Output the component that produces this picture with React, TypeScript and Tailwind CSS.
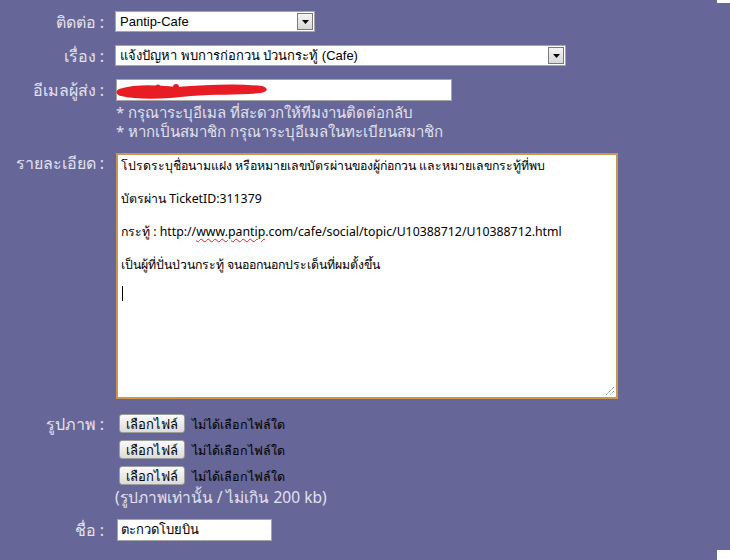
import React from 'react'

const thai = { fontFamily: "Tahoma, 'Noto Sans', 'DejaVu Sans', sans-serif" }
const arial = { fontFamily: "'Liberation Sans', Arial, 'Noto Sans', sans-serif" }

function Select({ value, width }: { value: string; width: string }) {
  return (
    <div
      className={`flex h-[21px] ${width} items-stretch border border-[#a5a5a5] bg-white`}
      style={arial}
    >
      <div className="flex-1 truncate pl-[4px] text-[13px] leading-[19px] text-black">{value}</div>
      <div className="m-[1px] flex w-[16px] items-center justify-center border border-[#7a7a7a] bg-gradient-to-b from-[#f4f4f4] to-[#d8d8d8]">
        <svg width="7" height="4" viewBox="0 0 7 4">
          <path d="M0 0h7L3.5 4z" fill="#000" />
        </svg>
      </div>
    </div>
  )
}

function Label({ children, className = '' }: { children: React.ReactNode; className?: string }) {
  return (
    <div className={`w-[105px] shrink-0 pr-[1px] text-right text-[16px] leading-[20px] text-[#e2e2ee] ${className}`}>
      {children}
    </div>
  )
}

function FileRow() {
  return (
    <div className="flex items-center gap-[7px]">
      <button className="h-[19px] rounded-[3px] border border-[#9d9d9d] bg-gradient-to-b from-[#fafafa] to-[#dcdcdc] px-[6px] text-[13px] leading-[16px] text-black">
        เลือกไฟล์
      </button>
      <span className="pt-[3px] text-[12.5px] leading-[16px] text-black">ไม่ได้เลือกไฟล์ใด</span>
    </div>
  )
}

export default function App() {
  return (
    <div className="relative h-[560px] w-[730px] overflow-hidden bg-[#666699]" style={thai}>
      {/* white strips at right edge */}
      <div className="absolute right-0 top-0 h-[3px] w-[13px] bg-white" />
      <div className="absolute bottom-0 right-0 h-[10px] w-[13px] bg-white" />

      <div className="flex flex-col pt-[11px]">
        <div className="flex items-start gap-[10px]">
          <Label className="pt-[1px]">ติดต่อ :</Label>
          <Select value="Pantip-Cafe" width="w-[200px]" />
        </div>

        <div className="mt-[13px] flex items-start gap-[10px]">
          <Label className="pt-[1px]">เรื่อง :</Label>
          <Select value="แจ้งปัญหา พบการก่อกวน ป่วนกระทู้ (Cafe)" width="w-[451px]" />
        </div>

        <div className="mt-[13px] flex items-start gap-[10px]">
          <Label className="pt-[1px]">อีเมลผู้ส่ง :</Label>
          <div className="flex flex-col pl-[1px]">
            <div className="relative h-[22px] w-[336px] border border-[#a5a5a5] bg-white">
              <svg className="absolute -left-[1px] top-0" width="155" height="22" viewBox="0 0 155 22">
                <path
                  d="M3 9 C20 4 40 5 60 7 C90 5 120 3 146 6 C153 8 152 12 145 13 C125 15 100 14 75 16 C50 19 22 20 5 16 C0 15 -1 11 3 9z"
                  fill="#e81c24"
                />
                <circle cx="60" cy="7" r="3" fill="#e81c24" />
                <circle cx="42" cy="7" r="2.5" fill="#e81c24" />
                <circle cx="30" cy="8" r="2" fill="#e81c24" />
              </svg>
            </div>
            <div className="mt-[2px] text-[15px] leading-[19px] text-[#e2e2ee]">
              * กรุณาระบุอีเมล ที่สะดวกให้ทีมงานติดต่อกลับ
            </div>
            <div className="text-[15px] leading-[19px] text-[#e2e2ee]">
              * หากเป็นสมาชิก กรุณาระบุอีเมลในทะเบียนสมาชิก
            </div>
          </div>
        </div>

        <div className="mt-[12px] flex items-start gap-[10px]">
          <Label>รายละเอียด :</Label>
          <div className="relative ml-[1px] h-[246px] w-[502px] border-2 border-[#c9974f] bg-white px-[3px] pt-[3px] text-[12.3px] leading-[16.5px] text-black">
            <div>โปรดระบุชื่อนามแฝง หรือหมายเลขบัตรผ่านของผู้ก่อกวน และหมายเลขกระทู้ที่พบ</div>
            <div className="h-[16.5px]" />
            <div>บัตรผ่าน TicketID:311379</div>
            <div className="h-[16.5px]" />
            <div>
              กระทู้ : http://
              <span className="underline decoration-[#e02020] decoration-wavy decoration-1 underline-offset-2">
                www.pantip
              </span>
              .com/cafe/social/topic/U10388712/U10388712.html
            </div>
            <div className="h-[16.5px]" />
            <div>เป็นผู้ที่ปั่นป่วนกระทู้ จนออกนอกประเด็นที่ผมตั้งขึ้น</div>
            <div className="h-[12px]" />
            <div className="ml-[1px] h-[15px] w-[1px] bg-black" />
            <svg className="absolute bottom-[1px] right-[1px]" width="10" height="10" viewBox="0 0 10 10">
              <path d="M9 1L1 9M9 5L5 9" stroke="#555" strokeWidth="1" strokeDasharray="1 1" />
            </svg>
          </div>
        </div>

        <div className="mt-[14px] flex items-start gap-[10px]">
          <Label className="pt-[1px]">รูปภาพ :</Label>
          <div className="flex flex-col gap-[7px] pl-[4px] pt-[1px]">
            <FileRow />
            <FileRow />
            <FileRow />
          </div>
        </div>
        <div className="flex">
          <div className="w-[115px] shrink-0" />
          <div className="mt-[1px] text-[15.5px] leading-[22px] text-[#e2e2ee]">
            (รูปภาพเท่านั้น / ไม่เกิน 200 kb)
          </div>
        </div>

        <div className="mt-[11px] flex items-start gap-[10px]">
          <Label className="pt-[1px]">ชื่อ :</Label>
          <div className="ml-[2px] flex h-[22px] w-[155px] items-center border border-[#a5a5a5] bg-white pl-[3px] text-[13px] text-black">
            ตะกวดโบยบิน
          </div>
        </div>
      </div>
    </div>
  )
}
